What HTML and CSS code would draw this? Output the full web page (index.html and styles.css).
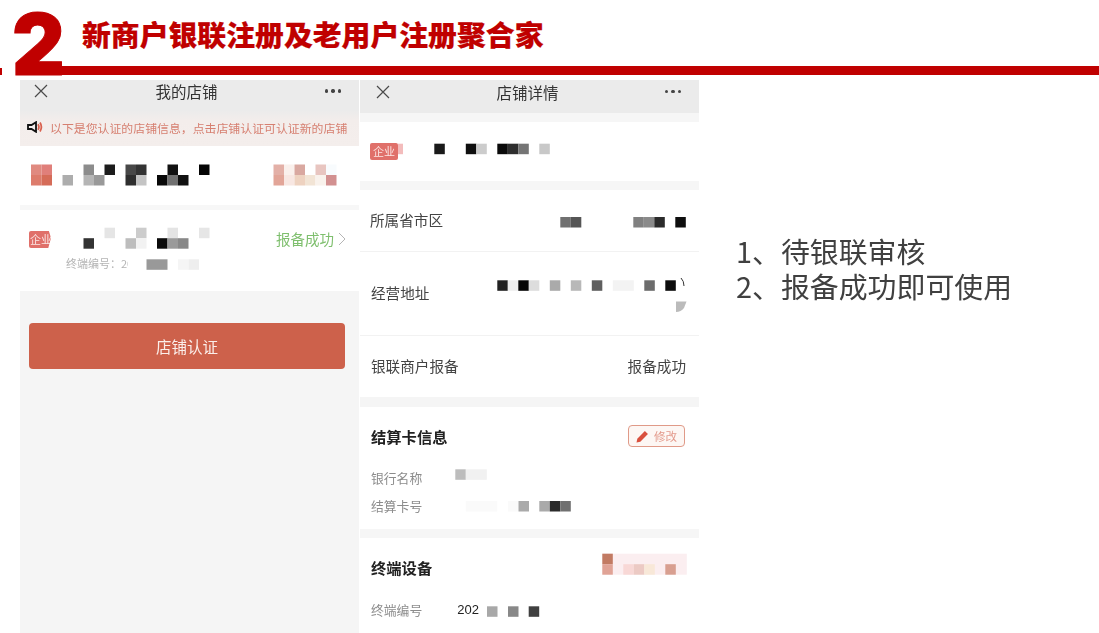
FILE: index.html
```html
<!DOCTYPE html>
<html lang="zh-CN">
<head>
<meta charset="utf-8">
<title>新商户银联注册及老用户注册聚合家</title>
<link rel="stylesheet" href="styles.css">
</head>
<body>
<div class="slide">
  <header class="head">
    <span class="tick"></span>
    <span class="num">2</span>
    <div class="head-main">
      <h1 class="title">新商户银联注册及老用户注册聚合家</h1>
      <div class="bar"></div>
    </div>
  </header>
  <main class="content">
    <section class="phone phone-a">
      <div class="nav nav-a">
        <svg class="close" viewBox="0 0 14 14"><path d="M1 1 13 13M13 1 1 13"/></svg>
        <span class="nav-title">我的店铺</span>
        <span class="dots"><i></i><i></i><i></i></span>
      </div>
      <div class="notice">
        <svg class="horn" viewBox="0 0 16 12"><path class="horn-body" d="M1 4H4.5L9 1.2V10.8L4.5 8H1Z"/><path class="horn-wave" d="M11 3.2Q12.8 6 11 8.8M13 1.6Q15.8 6 13 10.4"/></svg>
        <span>以下是您认证的店铺信息，点击店铺认证可认证新的店铺</span>
      </div>
      <div class="block store-head"></div>
      <div class="gap-a"></div>
      <div class="block store-item">
        <div class="item-left">
          <span class="badge">企业</span>
          <span class="term-no">终端编号：20</span>
        </div>
        <div class="item-state">报备成功<svg class="chev" viewBox="0 0 8 14"><path d="M1 1 7 7 1 13"/></svg></div>
      </div>
      <div class="btn-wrap"><div class="btn">店铺认证</div></div>
      <svg class="mosaic" viewBox="20 80 339 553">
        <g>
          <rect x="31" y="164.5" width="10.5" height="10.5" fill="#e08a80"/><rect x="41.5" y="164.5" width="10.5" height="10.5" fill="#e07f7a"/>
          <rect x="83.5" y="164.5" width="10.5" height="10.5" fill="#8c8c8c"/><rect x="104.5" y="164.5" width="10.5" height="10.5" fill="#1c1c1c"/>
          <rect x="125.5" y="164.5" width="10.5" height="10.5" fill="#484848"/><rect x="136" y="164.5" width="10.5" height="10.5" fill="#333"/>
          <rect x="167.5" y="164.5" width="10.5" height="10.5" fill="#111"/><rect x="199" y="164.5" width="10.5" height="10.5" fill="#050505"/>
          <rect x="31" y="175" width="10.5" height="10.5" fill="#dd7c6c"/><rect x="41.5" y="175" width="10.5" height="10.5" fill="#d56c58"/>
          <rect x="62.5" y="175" width="10.5" height="10.5" fill="#adadad"/><rect x="83.5" y="175" width="10.5" height="10.5" fill="#b5b5b5"/>
          <rect x="94" y="175" width="10.5" height="10.5" fill="#999"/><rect x="125.5" y="175" width="10.5" height="10.5" fill="#2e2e2e"/>
          <rect x="136" y="175" width="10.5" height="10.5" fill="#c4c4c4"/><rect x="157" y="175" width="10.5" height="10.5" fill="#080808"/>
          <rect x="167.5" y="175" width="10.5" height="10.5" fill="#707070"/><rect x="178" y="175" width="10.5" height="10.5" fill="#111"/>
          <rect x="273.5" y="164.5" width="10.5" height="10.5" fill="#e3b0a7"/><rect x="284" y="164.5" width="10.5" height="10.5" fill="#faf0ec"/>
          <rect x="294.5" y="164.5" width="10.5" height="10.5" fill="#d9a8a0"/><rect x="315.5" y="164.5" width="10.5" height="10.5" fill="#e8c5c0"/>
          <rect x="326" y="164.5" width="10.5" height="10.5" fill="#f8fbfd"/>
          <rect x="273.5" y="175" width="10.5" height="10.5" fill="#e2a598"/><rect x="284" y="175" width="10.5" height="10.5" fill="#f8e7e2"/>
          <rect x="294.5" y="175" width="10.5" height="10.5" fill="#eed2c0"/><rect x="305" y="175" width="10.5" height="10.5" fill="#f2e4d5"/>
          <rect x="315.5" y="175" width="10.5" height="10.5" fill="#f9f2ec"/><rect x="326" y="175" width="10.5" height="10.5" fill="#d29090"/>
        </g>
        <g>
          <path d="M54 228H48L51 238L48 249H54Z" fill="#fff"/>
          <rect x="104.5" y="227.7" width="10.5" height="10.5" fill="#e5e5e5"/><rect x="136" y="227.7" width="10.5" height="10.5" fill="#ccc"/>
          <rect x="167.5" y="227.7" width="10.5" height="10.5" fill="#e4e4e4"/><rect x="199" y="227.7" width="10.5" height="10.5" fill="#e6e6e6"/>
          <rect x="83.5" y="238.2" width="10.5" height="10.5" fill="#333"/><rect x="125.5" y="238.2" width="10.5" height="10.5" fill="#bdbdbd"/>
          <rect x="136" y="238.2" width="10.5" height="10.5" fill="#f2f2f2"/><rect x="157" y="238.2" width="10.5" height="10.5" fill="#0a0a0a"/>
          <rect x="167.5" y="238.2" width="10.5" height="10.5" fill="#9a9a9a"/><rect x="178" y="238.2" width="10.5" height="10.5" fill="#888"/>
          <rect x="128" y="257" width="72" height="14" fill="#fff"/>
          <rect x="146.5" y="259.3" width="21" height="10.5" fill="#999"/><rect x="178" y="259.3" width="10.5" height="10.5" fill="#f5f5f5"/>
          <rect x="188.5" y="259.3" width="10.5" height="10.5" fill="#eee"/>
        </g>
      </svg>
    </section>

    <section class="phone phone-b">
      <div class="nav nav-b">
        <svg class="close" viewBox="0 0 14 14"><path d="M1 1 13 13M13 1 1 13"/></svg>
        <span class="nav-title">店铺详情</span>
        <span class="dots"><i></i><i></i><i></i></span>
      </div>
      <div class="gap-b"></div>
      <div class="block d-store"><span class="badge">企业</span></div>
      <div class="gap-b"></div>
      <div class="block d-row d-region"><span>所属省市区</span></div>
      <div class="d-line"></div>
      <div class="block d-row d-addr"><span>经营地址</span></div>
      <div class="d-line"></div>
      <div class="block d-row d-union"><span>银联商户报备</span><span>报备成功</span></div>
      <div class="gap-c"></div>
      <div class="block d-card">
        <div class="card-head">
          <strong class="sec-title">结算卡信息</strong>
          <span class="edit"><svg class="pen" viewBox="0 0 12 12"><path d="M0.500 11.500 1.200 8 8.200 1 11 3.800 4 10.800Z"/></svg>修改</span>
        </div>
        <div class="kv kv-bank">银行名称</div>
        <div class="kv kv-card">结算卡号</div>
      </div>
      <div class="gap-b"></div>
      <div class="block d-term">
        <strong class="sec-title">终端设备</strong>
        <div class="kv kv-term"><span>终端编号</span><span class="kv-val">202</span></div>
      </div>
      <svg class="mosaic" viewBox="360 80 339 553">
        <rect x="398" y="143.7" width="5" height="10.5" fill="#f3bcbc"/>
        <rect x="434.3" y="143.7" width="10.5" height="10.5" fill="#1a1a1a"/><rect x="465.8" y="143.7" width="10.5" height="10.5" fill="#0f0f0f"/>
        <rect x="476.3" y="143.7" width="10.5" height="10.5" fill="#ccc"/><rect x="497.3" y="143.7" width="10.5" height="10.5" fill="#0a0a0a"/>
        <rect x="507.8" y="143.7" width="10.5" height="10.5" fill="#2e2e2e"/><rect x="518.3" y="143.7" width="10.5" height="10.5" fill="#757575"/>
        <rect x="539.3" y="143.7" width="10.5" height="10.5" fill="#c8c8c8"/>
        <rect x="560.3" y="217" width="10.5" height="10.5" fill="#707070"/><rect x="570.8" y="217" width="10.5" height="10.5" fill="#555"/>
        <rect x="633.3" y="217" width="10.5" height="10.5" fill="#808080"/><rect x="643.8" y="217" width="10.5" height="10.5" fill="#8a8a8a"/>
        <rect x="654.3" y="217" width="10.5" height="10.5" fill="#2b2b2b"/><rect x="675.3" y="217" width="10.5" height="10.5" fill="#0e0e0e"/>
        <rect x="497.3" y="280.3" width="10.5" height="10.5" fill="#222"/><rect x="507.8" y="280.3" width="10.5" height="10.5" fill="#eee"/>
        <rect x="518.3" y="280.3" width="10.5" height="10.5" fill="#050505"/><rect x="528.8" y="280.3" width="10.5" height="10.5" fill="#ddd"/>
        <rect x="549.8" y="280.3" width="10.5" height="10.5" fill="#aaa"/><rect x="570.8" y="280.3" width="10.5" height="10.5" fill="#b8b8b8"/>
        <rect x="591.8" y="280.3" width="10.5" height="10.5" fill="#5f5f5f"/><rect x="612.8" y="280.3" width="21" height="10.5" fill="#f3f3f3"/>
        <rect x="644.3" y="280.3" width="10.5" height="10.5" fill="#6c6c6c"/><rect x="665.3" y="280.3" width="10.5" height="10.5" fill="#0c0c0c"/>
        <path d="M681 278Q684 281 684 286" fill="none" stroke="#333" stroke-width="1"/>
        <path d="M676 301.500H686.500L684 308Q681 312 676 312Z" fill="#bbb"/>
        <rect x="455.300" y="469.300" width="10.500" height="10.500" fill="#bdbdbd"/><rect x="465.800" y="469.300" width="21" height="10.500" fill="#f1f1f1"/>
        <rect x="465.800" y="501" width="31.500" height="10.500" fill="#fafafa"/><rect x="508" y="501" width="10.500" height="10.500" fill="#fafafa"/>
        <rect x="518.500" y="501" width="10.500" height="10.500" fill="#aaa"/><rect x="539.300" y="501" width="10.500" height="10.500" fill="#aaa"/>
        <rect x="549.800" y="501" width="10.500" height="10.500" fill="#2b2b2b"/><rect x="560.300" y="501" width="10.500" height="10.500" fill="#707070"/>
        <rect x="602.300" y="553.700" width="84.500" height="21" fill="#fbeef0"/>
        <rect x="602.300" y="553.700" width="10.500" height="10.500" fill="#c27b63"/><rect x="602.300" y="564.200" width="10.500" height="10.500" fill="#e0a396"/>
        <rect x="623.300" y="564.200" width="10.500" height="10.500" fill="#f8d8d6"/><rect x="633.800" y="564.200" width="10.500" height="10.500" fill="#eccac4"/>
        <rect x="644.300" y="564.200" width="10.500" height="10.500" fill="#f8e8d8"/><rect x="665.300" y="564.200" width="10.500" height="10.500" fill="#d89f90"/>
        <rect x="487" y="606.300" width="10.500" height="10.500" fill="#a8a8a8"/><rect x="508" y="606.300" width="10.500" height="10.500" fill="#888"/>
        <rect x="528.700" y="606.300" width="10.500" height="10.500" fill="#404040"/>
      </svg>
    </section>

    <section class="notes">
      <p>1、待银联审核</p>
      <p>2、报备成功即可使用</p>
    </section>
  </main>
</div>
</body>
</html>
```
FILE: styles.css
```css
* { box-sizing: border-box; }
html, body { margin: 0; padding: 0; background: #fff; }
body { font-family: "Noto Sans CJK SC", "Noto Sans", "Liberation Sans", sans-serif; }
.slide { width: 1099px; height: 633px; overflow: hidden; display: flex; flex-direction: column; }

/* header */
.head { height: 80px; flex: none; display: flex; position: relative; }
.tick { position: absolute; left: 0; top: 68px; width: 2px; height: 7px; background: #c00000; }
.num {
  position: absolute; left: 12px; top: 12px; z-index: 1;
  font: 900 85px/66px Inter, "Liberation Sans", sans-serif; color: #c00000;
  -webkit-text-stroke: 1px #c00000;
  transform: scaleX(.96); transform-origin: left center;
}
.head-main { margin-left: 60px; flex: 1; display: flex; flex-direction: column; }
.title {
  margin: 15px 0 0 22px; height: 51px;
  font-size: 28.850px; line-height: 38px; font-weight: 900; color: #c00000;
  -webkit-text-stroke: .2px #c00000;
  white-space: nowrap;
}
.bar { height: 9px; background: #c00000; }

/* phones */
.content { flex: 1; display: flex; align-items: stretch; padding-left: 20px; min-height: 0; }
.phone { width: 339px; position: relative; background: #f5f5f5; display: flex; flex-direction: column; filter: blur(.35px); overflow: hidden; color: #444; }
.phone-a { margin-right: 1px; }
.mosaic { position: absolute; left: 0; top: 0; width: 339px; height: 553px; }
.block { background: #fff; }

.nav { flex: none; background: #ebebeb; display: flex; align-items: center; justify-content: space-between; position: relative; }
.nav-a { height: 30px; padding: 0 18px 8px 14px; }
.nav-b { height: 33px; padding: 0 18px 10px 16px; }
.close { width: 14px; height: 14px; fill: none; stroke: #4a4a4a; stroke-width: 1.2; }
.nav-title { font-size: 15.500px; line-height: 20px; color: #333; }
.dots { display: flex; gap: 3px; }
.dots i { width: 3.300px; height: 3.300px; border-radius: 50%; background: #444; }

.notice { height: 36px; flex: none; padding: 0 0 2px 7px; display: flex; align-items: center; gap: 7px; background: linear-gradient(#ebebeb, #f3edeb 30%, #f4eeec); color: #d67f70; font-size: 11.900px; white-space: nowrap; }
.horn { width: 16px; height: 12px; flex: none; }
.horn-body { fill: #f4eeec; stroke: #111; stroke-width: 1.800; }
.horn-wave { fill: none; stroke: #d9604e; stroke-width: 1.800; }

.store-head { height: 59px; flex: none; }
.gap-a { height: 5px; flex: none; background: #f7f7f7; }
.store-item { height: 81px; flex: none; padding: 21px 13px 0 9px; display: flex; justify-content: space-between; }
.item-left { display: flex; flex-direction: column; align-items: flex-start; }
.badge { width: 24px; height: 17px; flex: none; background: #e0706a; border-radius: 2px 0 0 2px; color: #fbe6e4; font-size: 11px; line-height: 17px; text-align: center; white-space: nowrap; overflow: hidden; }
.term-no { margin: 7px 0 0 37px; font-size: 11px; line-height: 16px; color: #b4b4b4; white-space: nowrap; }
.item-state { display: flex; align-items: center; height: 17px; margin-top: -1px; font-size: 14.500px; line-height: 17px; color: #7fbf6e; }
.chev { width: 8px; height: 14px; margin-left: 4px; fill: none; stroke: #b5b5b5; stroke-width: 1; }
.btn-wrap { padding: 32px 14px 0 9px; }
.btn { height: 46px; border-radius: 4px; background: #cd614b; color: #fbeeea; font-size: 15.500px; line-height: 46px; text-align: center; }

/* details */
.gap-b { height: 9px; flex: none; background: #f6f6f6; }
.gap-c { height: 10px; flex: none; background: #f5f5f5; }
.d-line { height: 1px; flex: none; background: #f2f2f2; }
.d-store { height: 59px; flex: none; padding: 21px 0 0 10px; }
.d-store .badge { display: block; width: 28px; border-radius: 2px; }
.d-row { flex: none; display: flex; justify-content: space-between; align-items: center; padding: 0 13px 3px 11px; font-size: 14.600px; color: #444; }
.d-region { height: 61px; padding-left: 10px; }
.d-addr { height: 83px; }
.d-union { height: 61px; }
.d-card { height: 122px; flex: none; padding: 18px 14px 0 11px; }
.card-head { display: flex; justify-content: space-between; align-items: center; height: 22px; }
.sec-title { font-size: 15.300px; line-height: 22px; font-weight: 700; color: #222; }
.edit { width: 57px; height: 22px; border: 1.500px solid #e09a88; border-radius: 4px; background: #fdf7f4; display: flex; align-items: center; justify-content: center; gap: 5px; color: #e39a8b; font-size: 11.500px; }
.pen { width: 13px; height: 13px; fill: #d9503e; }
.kv { font-size: 12.800px; line-height: 18px; color: #8c8c8c; }
.kv-bank { margin-top: 22px; }
.kv-card { margin-top: 10px; }
.d-term { flex: 1; padding: 17px 14px 0 11px; }
.kv-term { margin-top: 22px; display: flex; gap: 35px; }
.kv-val { color: #222; font: 400 13px/18px "Liberation Sans", sans-serif; }

/* notes */
.notes { margin: 153px 0 0 37px; color: #404040; font-size: 28.900px; line-height: 34.500px; white-space: nowrap; filter: blur(.25px); }
.notes p { margin: 0; }
```
